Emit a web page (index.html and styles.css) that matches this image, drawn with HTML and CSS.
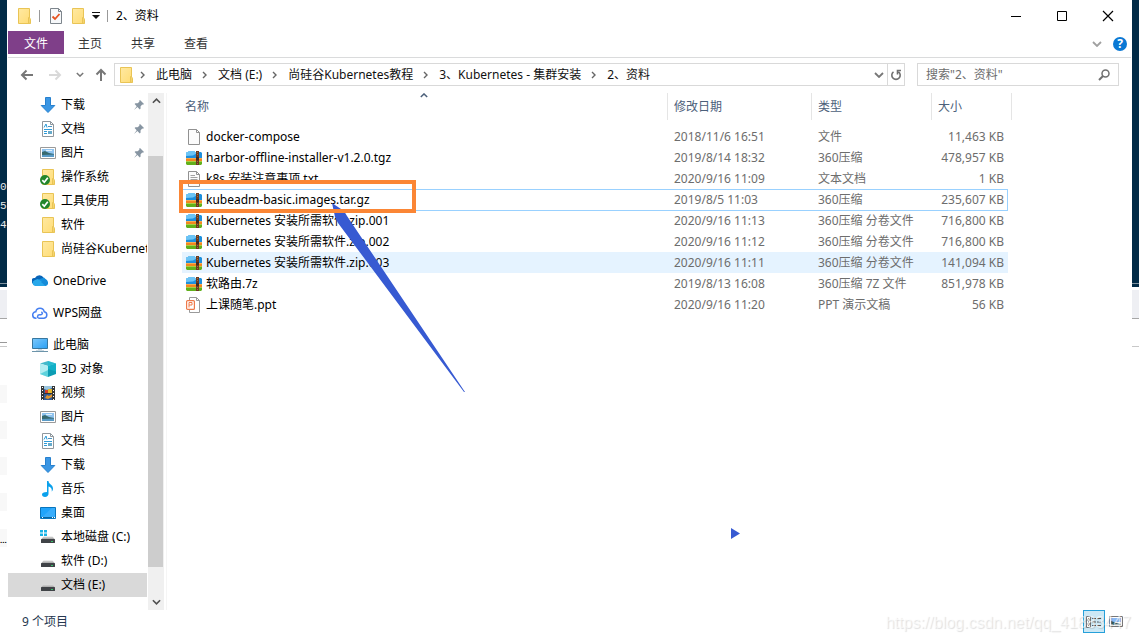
FILE: index.html
```html
<!DOCTYPE html>
<html lang="zh-CN">
<head>
  <meta charset="UTF-8">
  <meta name="viewport" content="width=device-width, initial-scale=1.0">
  <title>2、资料</title>
  <link rel="stylesheet" href="styles.css">
</head>
<body>
  <svg class="defs" aria-hidden="true">
    <linearGradient id="g-folder" x1="0" y1="0" x2="1" y2="1"><stop offset="0" stop-color="#ffe9a2"/><stop offset="1" stop-color="#ffdc74"/></linearGradient>
    <linearGradient id="g-blue" x1="0" y1="0" x2="1" y2="1"><stop offset="0" stop-color="#7cc8fb"/><stop offset="1" stop-color="#2aa0f4"/></linearGradient>
    <linearGradient id="g-disk" x1="0" y1="0" x2="0" y2="1"><stop offset="0" stop-color="#dcdcdc"/><stop offset="1" stop-color="#9b9b9b"/></linearGradient>
    <symbol id="folder" viewBox="0 0 16 16"><path d="M2.500.5h11v11h1v4h-12z" fill="url(#g-folder)" stroke="#e9c455"/><path d="M12.500 15v-5.500l1.500.5v5.500z" fill="#ffe48d" stroke="#e9c455"/></symbol>
    <symbol id="synced" viewBox="0 0 16 16"><use href="#folder"/><circle cx="5" cy="11" r="5" fill="#23862b"/><path d="M2.300 11.200l2 2.100 3.500-4.600" fill="none" stroke="#fff" stroke-width="1.700"/></symbol>
    <symbol id="download" viewBox="0 0 16 16"><path d="M5.500.5h5v8h4.300L8 15.500 1.200 8.500h4.300z" fill="#3a96e4" stroke="#2780ce"/></symbol>
    <symbol id="document" viewBox="0 0 16 16"><path d="M2.500.5h8l3 3v12h-11z" fill="#fff" stroke="#8f979d"/><path d="M10.500.5v3h3" fill="none" stroke="#8f979d"/><path d="M4 6.500l2-3.500 1 3.500M4 8.500h8M4 10.500h3M4 12.500h3" fill="none" stroke="#2d9bd8"/><path d="M8 5.500h4M8 10.500h4M8 12.500h4" stroke="#4b94c0"/><path d="M8 10h4v3H8z" fill="#67aaca"/></symbol>
    <symbol id="picture" viewBox="0 0 16 16"><path d="M.5 2.500h15v11H.5z" fill="#fff" stroke="#9a9a9a"/><path d="M2 4h12v8H2z" fill="#8fc3ef"/><path d="M6 5h6v1H6z" fill="#e0f0fb"/><path d="M2 7l3-1 4 2 5 1v3H2z" fill="#376a70"/><path d="M2 10l12-.5V12H2z" fill="#599ac6"/></symbol>
    <symbol id="pin" viewBox="0 0 10 10"><path d="M6 0l4 4-1 .8-.8-.2L6.500 6.400l.1 2.200-.8.8-2.400-2.400L0 10l2.700-3.700L.6 4l.8-.8 2.200.1L5.400 1.800 5.200.8z" fill="#8795a2"/></symbol>
    <symbol id="onedrive" viewBox="0 0 16 16"><path d="M2 11a3 3 0 0 1 1-6 5 5 0 0 1 8.800 0L14 9z" fill="#0864b8"/><path d="M5 7l7-2.500 3 3L14 12H4z" fill="#1490df"/><path d="M3 13a3 3 0 0 1-.5-5.800L5.500 6 15 11.500 13.500 13z" fill="#28a8ea"/><path d="M9 9l3-2.500A3 3 0 0 1 13.500 13z" fill="#168bd8"/></symbol>
    <symbol id="wps" viewBox="0 0 16 16"><path d="M4.500 13.200H4a3.200 3.200 0 0 1-.2-6.400 4.300 4.300 0 0 1 8.400-.1 3.300 3.300 0 0 1-.2 6.500H7c-2 0-2-3.400.5-3.400h1.200c1.800 0 2.100-2.200.6-2.800" fill="none" stroke="#457ff1" stroke-width="1.500"/></symbol>
    <symbol id="pc" viewBox="0 0 16 16"><path d="M.5 1.500h15v10H.5z" fill="url(#g-blue)" stroke="#37779f"/><path d="M6 12h4v1h2v1H4v-1h2z" fill="#cbd9e1"/><path d="M0 14.500h16" stroke="#6c94aa"/></symbol>
    <symbol id="cube" viewBox="0 0 16 16"><path d="M8 0l8 2.500L8 5 0 2.500z" fill="#44b9ca"/><path d="M0 2.500L8 5v11l-8-3z" fill="#b2edf2"/><path d="M16 2.500L8 5v11l8-3z" fill="#0d9db4"/><path d="M8 0l8 2.500v8L8 8z" fill="#16bdd3" opacity=".6"/><path d="M0 13l8-4v7z" fill="#5ed2dc"/></symbol>
    <symbol id="video" viewBox="0 0 16 16"><path d="M1 1h14v14H1z" fill="#373737"/><path d="M4 1h8v14H4z" fill="#315d9c"/><path d="M4 1h8v2l-5 2-3-1z" fill="#9ac6df"/><path d="M5 5h3v3H5z" fill="#d53f28"/><path d="M8 4h4v4H8z" fill="#e5b72a"/><path d="M5 13l2-3 2 1 3-2v3l-4 2z" fill="#e2952b"/><path d="M4 8.500h8" stroke="#333"/><path d="M2.500 2v13M13.500 2v13" stroke="#fff" stroke-dasharray="1 2"/></symbol>
    <symbol id="music" viewBox="0 0 16 16"><path d="M7 0h1.500c0 3 4.500 3.600 4.500 7.500 0 1.200-.5 2.300-1.300 3 .7-3.300-1.400-4.300-3.200-5V13c0 1.500-1.500 3-3.500 3S2 15 2 13.600 3.500 11 7 11z" fill="#0aa1ec"/></symbol>
    <symbol id="desktop" viewBox="0 0 16 16"><path d="M.5 2.500h15v11H.5z" fill="#20a4fb" stroke="#0875bd"/><path d="M1 13L12 3h3v10z" fill="#5cbcff" opacity=".4"/><path d="M1 12.500h14" stroke="#07649f"/><path d="M2 12.500h1M12 12.500h1M14 12.500h1" stroke="#fff"/></symbol>
    <symbol id="disk" viewBox="0 0 16 16"><path d="M3.500 7.500h9l2.500 3H1z" fill="url(#g-disk)"/><rect x="1" y="10" width="14" height="4" rx=".5" fill="#404347"/><path d="M11 12.500h2" stroke="#39c26b"/></symbol>
    <symbol id="disk-c" viewBox="0 0 16 16"><path d="M0 1h3v2.500H0zM4 1h3v2.500H4zM0 4.500h3V7H0zM4 4.500h3V7H4z" fill="#17b2e5"/><use href="#disk"/></symbol>
    <symbol id="file" viewBox="0 0 16 16"><path d="M2.500.5h8l3 3v12h-11z" fill="#fbfbfb" stroke="#919191"/><path d="M10.500.5v3h3" fill="none" stroke="#919191"/></symbol>
    <symbol id="text" viewBox="0 0 16 16"><use href="#file"/><path d="M4.500 4.500H9M4.500 6.500h7M4.500 8.500h7M4.500 10.500h7M4.500 12.500h7" stroke="#a2a2a2"/></symbol>
    <symbol id="archive" viewBox="0 0 16 16"><path d="M0 3l1-1h1l1-1h5l1 1h6l1 1v5H0z" fill="#1e8fdc"/><path d="M1 2h1l1-1h5l1 1h4L7 5.500 0 6V3z" fill="#6cc4f5"/><path d="M0 8h16v3H0z" fill="#f2871f"/><path d="M0 8h16v1H0z" fill="#f9ab52"/><path d="M0 11h16v3l-1 1H1l-1-1z" fill="#62b01c"/><path d="M0 11h16v1H0z" fill="#a9cf45"/><path d="M10 1h3v14h-3z" fill="#6b3a1f"/><path d="M11.500 2v4M11.500 11v4" stroke="#a06a41" stroke-dasharray="1 1"/><path d="M10 7h3v3h-3z" fill="#43291f"/></symbol>
    <symbol id="ppt" viewBox="0 0 16 16"><path d="M3.500 3V.5h7l3 3v12h-10V13" fill="#fff" stroke="#9a9a9a"/><path d="M10.500.5v3h3" fill="none" stroke="#9a9a9a"/><rect x=".6" y="3.600" width="7.800" height="8.800" rx="1" fill="#fff" stroke="#ee7a4a" stroke-width="1.200"/><path d="M3 10.500v-5h3v2.500H3" fill="none" stroke="#ee7a4a" stroke-width="1"/></symbol>
    <symbol id="task" viewBox="0 0 16 16"><path d="M2.500.5h8l3 3v12h-11z" fill="#f6f8fa" stroke="#7d858c"/><path d="M10.500.5v3h3" fill="none" stroke="#7d858c"/><path d="M4.500 8.500l2.500 2.500 4.500-5" fill="none" stroke="#e65320" stroke-width="1.800"/></symbol>
    <symbol id="chev-r" viewBox="0 0 6 8"><path d="M1 1l3 3-3 3" fill="none" stroke="#666" stroke-width="1.400"/></symbol>
    <symbol id="chev-d" viewBox="0 0 10 6"><path d="M1 1l4 4 4-4" fill="none" stroke="currentColor" stroke-width="1.800"/></symbol>
  </svg>

  <div class="backdrop">
    <div class="console"><span>0</span><span>5</span><span>4</span></div>
    <div class="panel"></div>
    <div class="lines"></div>
    <div class="stripes"></div>
    <div class="dots">...</div>
  </div>

  <div class="window">
    <header class="titlebar">
      <svg class="icon"><use href="#folder"/></svg>
      <i class="sep"></i>
      <button class="quick" aria-label="属性"><svg class="icon"><use href="#task"/></svg></button>
      <button class="quick" aria-label="新建文件夹"><svg class="icon"><use href="#folder"/></svg></button>
      <button class="more" aria-label="自定义快速访问工具栏"><svg width="8" height="7"><path d="M0 .5h8" stroke="#111"/><path d="M0 3h8L4 7z" fill="#111"/></svg></button>
      <i class="sep"></i>
      <h1 class="title">2、资料</h1>
      <div class="controls">
        <button aria-label="最小化"><svg width="12" height="12"><path d="M1 6.500h10" stroke="#000"/></svg></button>
        <button aria-label="最大化"><svg width="12" height="12"><path d="M1.500 1.500h9v9h-9z" fill="none" stroke="#000"/></svg></button>
        <button aria-label="关闭"><svg width="12" height="12"><path d="M1 1l10 10M11 1L1 11" stroke="#000" stroke-width="1.200"/></svg></button>
      </div>
    </header>

    <nav class="tabs">
      <button class="tab tab-file">文件</button>
      <button class="tab">主页</button>
      <button class="tab">共享</button>
      <button class="tab">查看</button>
      <div class="help">
        <button class="expand" aria-label="展开功能区"><svg width="10" height="6"><use href="#chev-d"/></svg></button>
        <button class="help-btn" aria-label="帮助">?</button>
      </div>
    </nav>

    <div class="navbar">
      <div class="history">
        <button aria-label="后退"><svg width="14" height="12"><path d="M13 6H2M6.500 1.500L2 6l4.500 4.500" fill="none" stroke="#777" stroke-width="2"/></svg></button>
        <button aria-label="前进"><svg width="14" height="12"><path d="M1 6h11M7.500 1.500L12 6l-4.500 4.500" fill="none" stroke="#d9d9d9" stroke-width="2"/></svg></button>
        <button class="recent" aria-label="最近的位置"><svg width="8" height="5"><use href="#chev-d"/></svg></button>
        <button class="up" aria-label="上移"><svg width="12" height="14"><path d="M6 13V2M1.500 6.500L6 2l4.500 4.500" fill="none" stroke="#777" stroke-width="2"/></svg></button>
      </div>
      <div class="address">
        <svg class="icon"><use href="#folder"/></svg>
        <svg class="chev"><use href="#chev-r"/></svg>
        <a href="#">此电脑</a>
        <svg class="chev"><use href="#chev-r"/></svg>
        <a href="#">文档 (E:)</a>
        <svg class="chev"><use href="#chev-r"/></svg>
        <a href="#">尚硅谷Kubernetes教程</a>
        <svg class="chev"><use href="#chev-r"/></svg>
        <a href="#">3、Kubernetes - 集群安装</a>
        <svg class="chev"><use href="#chev-r"/></svg>
        <a href="#">2、资料</a>
        <button class="drop" aria-label="以前的位置"><svg width="10" height="6"><use href="#chev-d"/></svg></button>
        <button class="refresh" aria-label="刷新"><svg width="12" height="12"><path d="M8.500 2.800A4.200 4.200 0 1 1 3.500 2.800M4.500 5.500V1.500H1" fill="none" stroke="#707070" stroke-width="1.600" transform="matrix(-1 0 0 1 12 0)"/></svg></button>
      </div>
      <div class="search">
        <input type="search" aria-label="搜索" placeholder="搜索&quot;2、资料&quot;">
        <button aria-label="开始搜索"><svg width="12" height="12"><circle cx="7.500" cy="4.500" r="3.500" fill="none" stroke="#707070" stroke-width="1.500"/><path d="M5 7L1 11" stroke="#707070" stroke-width="2"/></svg></button>
      </div>
    </div>

    <main class="content">
      <nav class="tree">
        <div class="group">
          <a href="#"><svg class="icon"><use href="#download"/></svg>下载<svg class="pin"><use href="#pin"/></svg></a>
          <a href="#"><svg class="icon"><use href="#document"/></svg>文档<svg class="pin"><use href="#pin"/></svg></a>
          <a href="#"><svg class="icon"><use href="#picture"/></svg>图片<svg class="pin"><use href="#pin"/></svg></a>
          <a href="#"><svg class="icon"><use href="#synced"/></svg>操作系统</a>
          <a href="#"><svg class="icon"><use href="#synced"/></svg>工具使用</a>
          <a href="#"><svg class="icon"><use href="#folder"/></svg>软件</a>
          <a href="#"><svg class="icon"><use href="#folder"/></svg>尚硅谷Kubernetes教程</a>
        </div>
        <div class="group"><a class="root" href="#"><svg class="icon"><use href="#onedrive"/></svg>OneDrive</a></div>
        <div class="group"><a class="root" href="#"><svg class="icon"><use href="#wps"/></svg>WPS网盘</a></div>
        <div class="group">
          <a class="root" href="#"><svg class="icon"><use href="#pc"/></svg>此电脑</a>
          <a href="#"><svg class="icon"><use href="#cube"/></svg>3D 对象</a>
          <a href="#"><svg class="icon"><use href="#video"/></svg>视频</a>
          <a href="#"><svg class="icon"><use href="#picture"/></svg>图片</a>
          <a href="#"><svg class="icon"><use href="#document"/></svg>文档</a>
          <a href="#"><svg class="icon"><use href="#download"/></svg>下载</a>
          <a href="#"><svg class="icon"><use href="#music"/></svg>音乐</a>
          <a href="#"><svg class="icon"><use href="#desktop"/></svg>桌面</a>
          <a href="#"><svg class="icon"><use href="#disk-c"/></svg>本地磁盘 (C:)</a>
          <a href="#"><svg class="icon"><use href="#disk"/></svg>软件 (D:)</a>
          <a class="current" href="#"><svg class="icon"><use href="#disk"/></svg>文档 (E:)</a>
        </div>
      </nav>
      <div class="scrollbar">
        <button aria-label="向上滚动"><svg class="flip" width="9" height="6"><use href="#chev-d"/></svg></button>
        <div class="track"><div class="thumb"></div></div>
        <button aria-label="向下滚动"><svg width="9" height="6"><use href="#chev-d"/></svg></button>
      </div>

      <section class="files">
        <table>
          <colgroup><col><col class="col-date"><col class="col-type"><col class="col-size"><col class="col-end"></colgroup>
          <thead>
            <tr>
              <th><span>名称</span><svg class="sort flip" width="8" height="5"><use href="#chev-d"/></svg></th>
              <th><span>修改日期</span></th>
              <th><span>类型</span></th>
              <th colspan="2"><span>大小</span></th>
            </tr>
          </thead>
          <tbody>
            <tr><td><a href="#"><svg class="icon"><use href="#file"/></svg>docker-compose</a></td><td>2018/11/6 16:51</td><td>文件</td><td>11,463 KB</td></tr>
            <tr><td><a href="#"><svg class="icon"><use href="#archive"/></svg>harbor-offline-installer-v1.2.0.tgz</a></td><td>2019/8/14 18:32</td><td>360压缩</td><td>478,957 KB</td></tr>
            <tr><td><a href="#"><svg class="icon"><use href="#text"/></svg>k8s 安装注意事项.txt</a></td><td>2020/9/16 11:09</td><td>文本文档</td><td>1 KB</td></tr>
            <tr class="focused"><td><a href="#"><svg class="icon"><use href="#archive"/></svg>kubeadm-basic.images.tar.gz</a></td><td>2019/8/5 11:03</td><td>360压缩</td><td>235,607 KB</td></tr>
            <tr><td><a href="#"><svg class="icon"><use href="#archive"/></svg>Kubernetes 安装所需软件.zip.001</a></td><td>2020/9/16 11:13</td><td>360压缩 分卷文件</td><td>716,800 KB</td></tr>
            <tr><td><a href="#"><svg class="icon"><use href="#archive"/></svg>Kubernetes 安装所需软件.zip.002</a></td><td>2020/9/16 11:12</td><td>360压缩 分卷文件</td><td>716,800 KB</td></tr>
            <tr class="hovered"><td><a href="#"><svg class="icon"><use href="#archive"/></svg>Kubernetes 安装所需软件.zip.003</a></td><td>2020/9/16 11:11</td><td>360压缩 分卷文件</td><td>141,094 KB</td></tr>
            <tr><td><a href="#"><svg class="icon"><use href="#archive"/></svg>软路由.7z</a></td><td>2019/8/13 16:08</td><td>360压缩 7Z 文件</td><td>851,978 KB</td></tr>
            <tr><td><a href="#"><svg class="icon"><use href="#ppt"/></svg>上课随笔.ppt</a></td><td>2020/9/16 11:20</td><td>PPT 演示文稿</td><td>56 KB</td></tr>
          </tbody>
        </table>
      </section>
    </main>

    <footer class="status">
      <span>9 个项目</span>
      <div class="views">
        <button class="view active" aria-label="详细信息"><svg width="16" height="14"><path d="M.5 1.500h4v11h-4zM.5 5h4M.5 9h4" fill="#fff" stroke="#777"/><path d="M2 3.500h1M2 7h1M2 10.500h1" stroke="#333"/><path d="M6 3.500h10M6 7h10M6 10.500h10" stroke="#555" stroke-dasharray="4 1"/></svg></button>
        <button class="view" aria-label="大图标"><svg width="14" height="12"><path d="M.5.5h13v10H.5z" fill="#fff" stroke="#777"/><path d="M2 2h10v4H2z" fill="#8ab8f4"/><path d="M2 5l3 1 2 1 5 1v1H2z" fill="#315a62"/></svg></button>
      </div>
    </footer>
  </div>

  <div class="backdrop">
    <div class="console"></div>
    <div class="panel"></div>
    <div class="lines single"></div>
  </div>

  <svg class="marks" aria-hidden="true">
    <path d="M332 203l12 8 3 5 118 176-1 0L338 223l-3-6z" fill="#375ad2"/>
    <path d="M181 182h233v29H181z" fill="none" stroke="#fb8635" stroke-width="4"/>
    <path d="M731 528l9 5.500-9 5.500z" fill="#375ad2"/>
  </svg>
  <div class="watermark">https://blog.csdn.net/qq_41883447</div>
</body>
</html>
```

FILE: styles.css
```css
* {
  box-sizing: border-box;
}
body {
  margin: 0;
  height: 100vh;
  display: flex;
  overflow: hidden;
  position: relative;
  background: #fff;
  color: #000;
  font: 12px/16px "Noto Sans", "Noto Sans CJK SC", sans-serif;
}
button {
  padding: 0;
  border: 0;
  background: none;
  color: inherit;
  font: inherit;
  display: flex;
  align-items: center;
  justify-content: center;
}
a {
  color: inherit;
  text-decoration: none;
}
svg {
  display: block;
  flex: none;
}
.defs {
  position: absolute;
  width: 0;
  height: 0;
}
.icon {
  width: 16px;
  height: 16px;
}
.flip {
  transform: rotate(180deg);
}

/* what shows on both sides of the window */
.backdrop {
  width: 7px;
  flex: none;
  overflow: hidden;
}
.console {
  height: 287px;
  padding-top: 178px;
  background: linear-gradient(#012a46 283px, #7f929f 283px, #7f929f 284px, #012a46 284px);
  color: #e8e8e8;
  font: 11px/19px "Liberation Mono", monospace;
}
.console span {
  display: block;
}
.panel {
  height: 29px;
  margin-top: 3px;
  background: #eeeff3;
  border-bottom: 1px solid #a6a6a6;
}
.lines {
  height: 5px;
  margin-top: 23px;
  border-top: 1px solid #999;
  border-bottom: 1px solid #c8c8c8;
}
.lines.single {
  border-top: 0;
}
.stripes {
  height: 162px;
  margin-top: 38px;
  background: repeating-linear-gradient(#f8f8f8 0, #f8f8f8 18px, #fff 18px, #fff 36px);
}
.dots {
  margin-top: -14px;
  font: bold 8px/16px "Liberation Sans", Arial, sans-serif;
}

.window {
  flex: 1;
  min-width: 0;
  padding: 0 1px;
  display: flex;
  flex-direction: column;
  background: #fff;
}
.titlebar {
  height: 31px;
  display: flex;
  align-items: center;
  padding-left: 8px;
}
.sep {
  width: 1px;
  height: 12px;
  margin: 0 8px 0 7px;
  background: #999;
}
.quick {
  margin-right: 6px;
}
.title {
  margin: 0;
  font-size: 12px;
  font-weight: normal;
}
.controls {
  display: flex;
  margin-left: auto;
}
.controls button {
  width: 46px;
  height: 31px;
}

.tabs {
  height: 27px;
  display: flex;
  align-items: flex-start;
  gap: 1px;
  border-bottom: 1px solid #dadbdc;
}
.tab {
  height: 23px;
  padding: 2px 14px 0;
  color: #333;
}
.tab-file {
  padding: 2px 16px 0;
  margin-right: -1px;
  background: #7f3f89;
  color: #fff;
}
.help {
  display: flex;
  align-items: center;
  gap: 11px;
  margin: 6px 4px 0 auto;
}
.expand {
  color: #a0a0a0;
}
.help-btn {
  width: 14px;
  height: 14px;
  border-radius: 50%;
  background: #0a78d4;
  color: #fff;
  font-weight: bold;
}

.navbar {
  display: flex;
  padding: 5px 12px 7px;
  color: #777;
}
.history {
  display: flex;
  align-items: center;
  width: 94px;
  gap: 14px;
}
.up {
  margin-left: -3px;
}
.address {
  flex: 1;
  min-width: 0;
  height: 23px;
  display: flex;
  align-items: center;
  padding-left: 3px;
  border: 1px solid #d9d9d9;
  white-space: nowrap;
}
.address a {
  color: #111;
}
.chev {
  width: 6px;
  height: 8px;
  margin: 0 10px;
}
.address .icon + .chev {
  margin-left: 6px;
}
.drop {
  width: 16px;
  margin-left: auto;
}
.refresh {
  width: 17px;
  height: 21px;
  border-left: 1px solid #d9d9d9;
}
.search {
  width: 202px;
  height: 23px;
  display: flex;
  align-items: center;
  margin-left: 12px;
  padding: 0 8px;
  border: 1px solid #d9d9d9;
}
.search input {
  flex: 1;
  min-width: 0;
  padding: 0;
  border: 0;
  outline: 0;
  background: none;
  font: inherit;
}
.search input::placeholder {
  color: #6d6d6d;
}

.content {
  flex: 1;
  min-height: 0;
  display: flex;
}
.tree {
  width: 140px;
  padding-right: 1px;
  flex: none;
  overflow: hidden;
}
.group {
  margin-bottom: 8px;
}
.tree a {
  height: 24px;
  display: flex;
  align-items: center;
  gap: 5px;
  padding-left: 32px;
  white-space: nowrap;
  overflow: hidden;
}
.tree .root {
  padding-left: 24px;
}
.tree .current {
  background: #d9d9d9;
}
.pin {
  width: 10px;
  height: 10px;
  margin: 0 3px 0 auto;
}
.scrollbar {
  width: 16px;
  flex: none;
  display: flex;
  flex-direction: column;
  background: #f0f0f0;
  color: #505050;
}
.scrollbar button {
  height: 16px;
}
.track {
  flex: 1;
  display: flex;
  flex-direction: column;
}
.track::before {
  content: "";
  flex: 47;
}
.track::after {
  content: "";
  flex: 27;
}
.thumb {
  flex: 411;
  width: 15px;
  background: #cdcdcd;
}

.files {
  flex: 1;
  min-width: 0;
  margin-left: 2px;
  padding: 0 119px 0 15px;
  border-left: 1px solid #f5f5f5;
}
.files table {
  width: 100%;
  table-layout: fixed;
  border-collapse: separate;
  border-spacing: 0;
  color: #6d6d6d;
}
.col-date {
  width: 144px;
}
.col-type {
  width: 120px;
}
.col-size {
  width: 76px;
}
.col-end {
  width: 4px;
}
.files th {
  position: relative;
  padding: 0 0 6px;
  text-align: left;
  font-weight: normal;
  color: #4c607a;
}
.files th span {
  display: block;
  height: 27px;
  padding-left: 6px;
  line-height: 27px;
  border-right: 1px solid #e5e5e5;
}
.files th:first-child span {
  padding-left: 3px;
}
.sort {
  position: absolute;
  top: 0;
  left: calc(50% - 5px);
}
.files td {
  height: 21px;
  padding: 0 0 0 6px;
  white-space: nowrap;
}
.files td:first-child {
  padding-left: 4px;
}
.files td:nth-child(4) {
  padding: 0 4px 0 0;
  text-align: right;
}
.files td a {
  display: flex;
  align-items: center;
  gap: 4px;
  color: #000;
}
.focused td {
  box-shadow: inset 0 1px #99d1ff, 0 1px #99d1ff;
}
.focused td:first-child {
  box-shadow: inset 1px 1px #99d1ff, 0 1px #99d1ff;
}
.focused td:last-child {
  box-shadow: inset -1px 1px #99d1ff, 0 1px #99d1ff;
}
.hovered td {
  background: #e5f3ff;
}

.status {
  height: 31px;
  display: flex;
  align-items: flex-start;
  padding: 0 4px 0 14px;
  color: #26374f;
}
.status span {
  line-height: 23px;
}
.views {
  display: flex;
  margin-left: auto;
}
.view {
  width: 22px;
  height: 23px;
}
.view.active {
  border: 1px solid #26a0da;
  background: #cce8f5;
}

/* drawn over the window */
.marks {
  position: absolute;
  top: 0;
  left: 0;
  width: 100%;
  height: 100%;
  pointer-events: none;
}
.watermark {
  position: absolute;
  right: 8px;
  bottom: 9px;
  color: rgba(255, 255, 255, 0.6);
  text-shadow: 1px 1px 1px rgba(0, 0, 0, 0.13);
  font: 16px/18px "Liberation Sans", Arial, sans-serif;
  pointer-events: none;
}
```
